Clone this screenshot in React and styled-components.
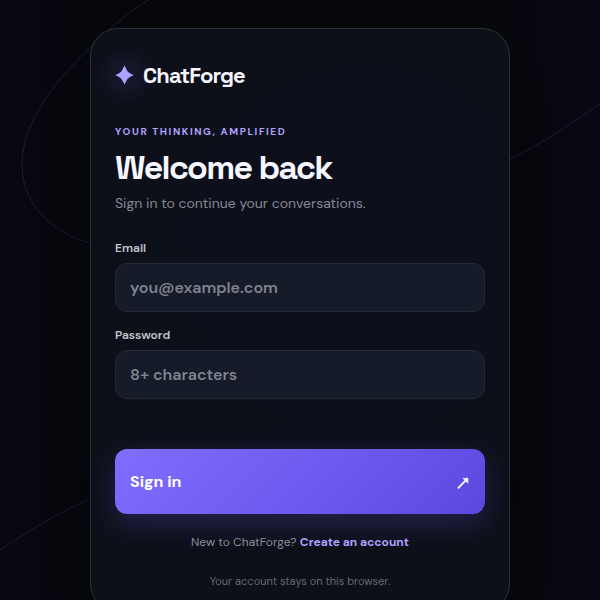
import React,{useState} from 'react'
import styled,{createGlobalStyle} from 'styled-components';

function App() {
    const [email,setEmail]=useState('');
    const [password,setPassword]=useState('');
    return (
        <Page>
            <GlobalStyle/>
            <Backdrop viewBox="0 0 600 600" preserveAspectRatio="none" aria-hidden="true">
                <path d="M150 -1C125 14 106 32 90 48C47 88 22 128 22 165C22 203 50 232 90 243"/>
                <path d="M510 159C540 145 570 124 600 104"/>
                <path d="M0 550C28 531 58 513 90 499"/>
            </Backdrop>
            <Card>
                <Brand>
                    <Spark viewBox="0 0 20 20" aria-hidden="true">
                        <path d="M9.5 0.6C10.6 2.6 11.4 4.8 12.9 6.7C14.6 8.2 16.8 9.1 19 10.1C16.8 11.1 14.6 12 12.9 13.5C11.4 15.4 10.6 17.6 9.5 19.6C8.4 17.6 7.6 15.4 6.1 13.5C4.4 12 2.2 11.1 0 10.1C2.2 9.1 4.4 8.2 6.1 6.7C7.6 4.8 8.4 2.6 9.5 0.6Z"/>
                    </Spark>
                    <BrandName>ChatForge</BrandName>
                </Brand>
                <Eyebrow>Your thinking, amplified</Eyebrow>
                <Title>Welcome back</Title>
                <Subtitle>Sign in to continue your conversations.</Subtitle>
                <Form onSubmit={(e)=>e.preventDefault()}>
                    <Field>
                        <Label htmlFor="email">Email</Label>
                        <Input id="email" type="email" placeholder="you@example.com" value={email} onChange={(e)=>setEmail(e.target.value)}/>
                    </Field>
                    <Field>
                        <Label htmlFor="password">Password</Label>
                        <Input id="password" type="password" placeholder="8+ characters" value={password} onChange={(e)=>setPassword(e.target.value)}/>
                    </Field>
                    <SubmitButton type="submit">
                        Sign in
                        <Arrow viewBox="0 0 14 16" aria-hidden="true">
                            <path d="M1.9 14.3L9.5 6.7" fill="none" stroke="currentColor" strokeWidth="1.8"/>
                            <path d="M7 4.4L12 4.2L11.8 9.2Z" fill="currentColor" stroke="currentColor" strokeWidth="0.6" strokeLinejoin="round"/>
                        </Arrow>
                    </SubmitButton>
                </Form>
                <Switch>New to ChatForge? <a href="#">Create an account</a></Switch>
                <Note>Your account stays on this browser.</Note>
            </Card>
        </Page>
    )
}

export default App

const GlobalStyle=createGlobalStyle`
*{
    box-sizing:border-box;
}
body{
    margin:0;
    background:#07080d;
    color:#f5f6ff;
    font-family:"DM Sans",Inter,"Liberation Sans",sans-serif;
}
`;

const Page=styled.main`
  position:relative;
  min-height:100vh;
  display:flex;
  align-items:center;
  justify-content:center;
  padding:28px 16px;
  overflow:hidden;
  background:linear-gradient(90deg,#080912,#07080c 20%,#07080c 80%,#080914);
`;

const Backdrop=styled.svg`
  position:absolute;
  top:0;
  left:0;
  width:100%;
  height:100vh;
  fill:none;
  stroke:#1f1c3a;
  stroke-width:1;
`;

const Card=styled.section`
  position:relative;
  width:100%;
  max-width:420px;
  padding:24px 24px 22px;
  border:1px solid #2f3137;
  border-radius:28px;
  background:radial-gradient(circle at 65% 38%,#0d0f1d,#0d1018 60%);
  box-shadow:0 24px 80px rgba(0,0,0,.45);
`;

const Brand=styled.div`
  display:flex;
  align-items:center;
  gap:8px;
  height:44px;
`;

const Spark=styled.svg`
  width:20px;
  height:20px;
  fill:#afa1ff;
  border-radius:50%;
  background:rgba(124,104,255,.08);
  box-shadow:0 0 24px 4px rgba(124,104,255,.22);
`;

const BrandName=styled.span`
  font-family:"Space Grotesk",Inter,sans-serif;
  font-size:22px;
  font-weight:600;
  letter-spacing:-0.04em;
`;

const Eyebrow=styled.p`
  margin:27px 0 9px;
  color:#afa1ff;
  font-size:10px;
  line-height:16px;
  font-weight:700;
  letter-spacing:0.16em;
  text-transform:uppercase;
`;

const Title=styled.h1`
  margin:0;
  font-family:"Space Grotesk",Inter,sans-serif;
  font-size:34px;
  line-height:38px;
  font-weight:600;
  letter-spacing:-0.05em;
`;

const Subtitle=styled.p`
  margin:4px 0 23px;
  color:#868995;
  font-size:14px;
  line-height:24px;
`;

const Form=styled.form`
  display:flex;
  flex-direction:column;
  gap:13px;
`;

const Field=styled.div`
  display:flex;
  flex-direction:column;
  gap:5px;
`;

const Label=styled.label`
  color:#c3c5ce;
  font-size:12px;
  line-height:20px;
  font-weight:600;
`;

const Input=styled.input`
  width:100%;
  height:49px;
  padding:0 14px;
  border:1px solid #262a36;
  border-radius:12px;
  outline:none;
  background:#161b29;
  color:#f5f6ff;
  font-family:inherit;
  font-size:16px;
  font-weight:600;
  &::placeholder{
    color:#808390;
    opacity:1;
  }
  &:focus{
    border-color:#7c68ff;
  }
`;

const SubmitButton=styled.button`
  display:flex;
  align-items:center;
  justify-content:space-between;
  height:65px;
  margin-top:37px;
  padding:0 15px;
  border:0;
  border-radius:12px;
  background:linear-gradient(135deg,#816eff,#5b48df);
  box-shadow:0 10px 30px rgba(109,86,245,.25);
  color:#fff;
  font-family:inherit;
  font-size:16px;
  font-weight:700;
  cursor:pointer;
`;

const Arrow=styled.svg`
  width:14px;
  height:16px;
`;

const Switch=styled.p`
  margin:18px 0 21px;
  color:#8b8e99;
  font-size:12px;
  line-height:20px;
  text-align:center;
  a{
    color:#afa1ff;
    font-weight:700;
    text-decoration:none;
  }
`;

const Note=styled.p`
  margin:0;
  color:#656872;
  font-size:11px;
  line-height:16px;
  text-align:center;
`;
